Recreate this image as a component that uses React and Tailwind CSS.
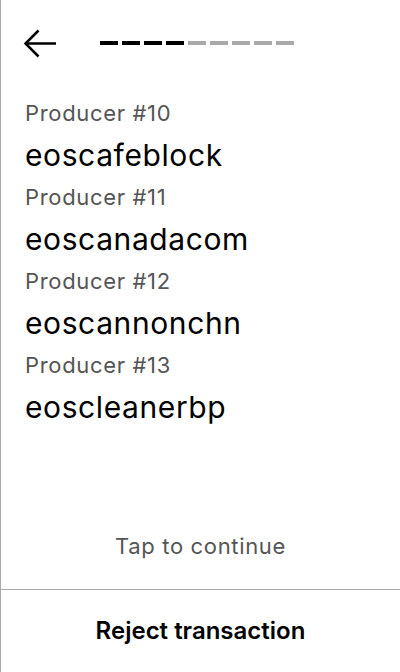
import React from 'react';

const producers = [
  { n: 10, name: 'eoscafeblock' },
  { n: 11, name: 'eoscanadacom' },
  { n: 12, name: 'eoscannonchn' },
  { n: 13, name: 'eoscleanerbp' },
];

const BackArrow = () => (
  <svg width="40" height="40" viewBox="0 0 40 40" fill="none" stroke="#000" strokeWidth="2.5">
    <path d="M6 19.5H36" />
    <path d="M18.5 6.5L5.5 19.5L18.5 32.5" />
  </svg>
);

export default function App() {
  return (
    <div
      className="w-[400px] h-[672px] flex flex-col bg-white border-l border-[#aaaaaa] text-black"
      style={{ fontFamily: 'Inter, "Noto Sans", sans-serif' }}
    >
      {/* Header */}
      <div className="flex items-center h-[87px] pl-[19px]">
        <BackArrow />
        <div className="flex gap-1 ml-10 -mt-[2px]">
          {[0, 1, 2, 3, 4, 5, 6, 7, 8].map((i) => (
            <div key={i} className={i < 4 ? 'w-[18px] h-1 bg-black' : 'w-[18px] h-1 bg-[#aaaaaa]'} />
          ))}
        </div>
      </div>

      {/* Producers */}
      <div className="flex flex-col px-6 pt-2">
        {producers.map((p) => (
          <div key={p.n} className="flex flex-col">
            <div className="text-[22px] leading-[36px] tracking-[0.03em] text-[#555555]">Producer #{p.n}</div>
            <div className="text-[30px] leading-[48px] tracking-[0.02em]">{p.name}</div>
          </div>
        ))}
      </div>

      <div className="flex-1" />

      <div className="text-center text-[22px] leading-[32px] tracking-[0.03em] text-[#555555] pb-[27px]">
        Tap to continue
      </div>

      <div className="h-[83px] border-t border-[#aaaaaa] flex items-center justify-center">
        <span className="text-[24px] font-semibold">Reject transaction</span>
      </div>
    </div>
  );
}
